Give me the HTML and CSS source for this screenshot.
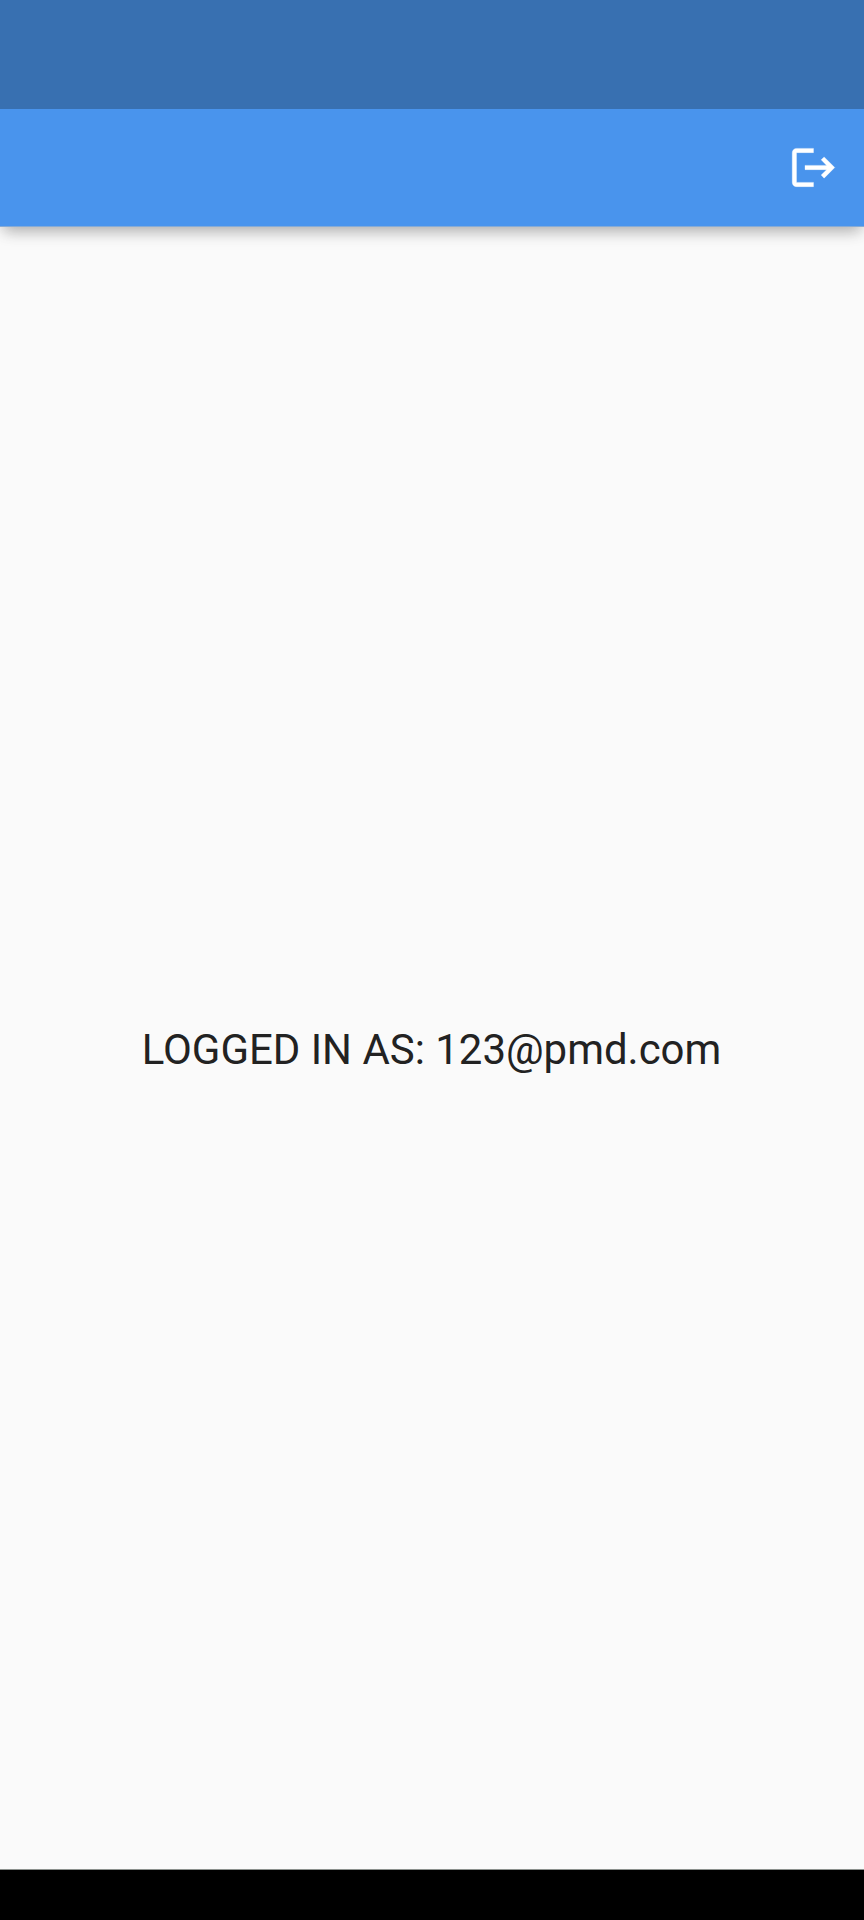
FILE: index.html
```html
<!DOCTYPE html>
<html lang="en">
<head>
<meta charset="utf-8">
<title>Home</title>
<link rel="stylesheet" href="styles.css">
</head>
<body>
<div class="screen">
  <header class="app-header">
    <div class="status-bar"></div>
    <div class="toolbar">
      <button class="logout" aria-label="Log out">
        <svg viewBox="0 0 24 24" fill="currentColor" stroke="currentColor" stroke-width="0.15" stroke-linejoin="round"><path d="M17 7l-1.41 1.41L18.17 11H8v2h10.17l-2.58 2.58L17 17l5-5zM4 5h8V3H4c-1.1 0-2 .9-2 2v14c0 1.1.9 2 2 2h8v-2H4V5z"/></svg>
      </button>
    </div>
  </header>
  <main class="content">
    <p class="message">LOGGED IN AS: 123@pmd.com</p>
  </main>
  <footer class="nav-bar"></footer>
</div>
</body>
</html>
```
FILE: styles.css
```css
body {
  margin: 0;
  font-family: Roboto, sans-serif;
}

.screen {
  display: flex;
  flex-direction: column;
  height: 1920px;
  overflow: hidden;
  background: #fafafa;
}

.app-header {
  background: #4994ed;
  border-bottom: 1px solid #86abd6;
  box-shadow: 0 8px 14px -4px rgba(0, 0, 0, 0.26), 0 4px 16px rgba(0, 0, 0, 0.08);
}

.status-bar {
  height: 109px;
  background: #3870b1;
}

.toolbar {
  display: flex;
  align-items: center;
  justify-content: flex-end;
  height: 117px;
  padding-right: 25px;
}

.logout {
  display: flex;
  padding: 0;
  border: 0;
  background: none;
  color: #fff;
}

.logout svg {
  width: 51px;
  height: 51px;
}

.content {
  display: flex;
  flex: 1;
  align-items: center;
  justify-content: center;
}

.message {
  margin: 0;
  padding: 3px 1px 0 0;
  font-size: 41.95px;
  color: #222;
  white-space: nowrap;
}

.nav-bar {
  height: 50px;
  border-top: 1px solid #8b908d;
  background: #000;
}
```
